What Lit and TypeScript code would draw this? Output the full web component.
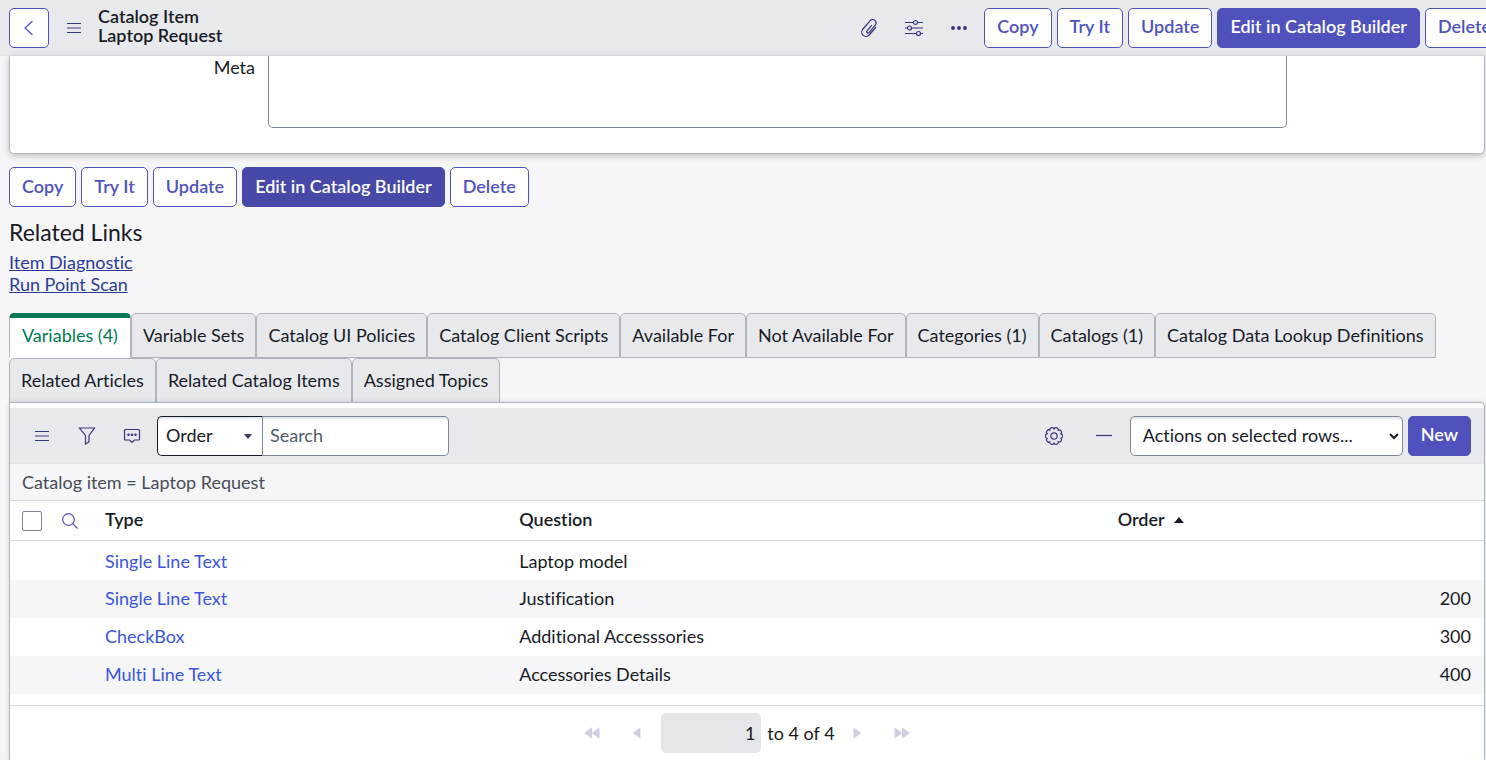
import { LitElement, html, svg, css } from "lit";
import { customElement, state } from "lit/decorators.js";
import { classMap } from "lit/directives/class-map.js";

interface Variable {
  type: string;
  question: string;
  order: string;
}

const TABS = [
  "Variables (4)",
  "Variable Sets",
  "Catalog UI Policies",
  "Catalog Client Scripts",
  "Available For",
  "Not Available For",
  "Categories (1)",
  "Catalogs (1)",
  "Catalog Data Lookup Definitions",
  "Related Articles",
  "Related Catalog Items",
  "Assigned Topics",
];

const ROWS: Variable[] = [
  { type: "Single Line Text", question: "Laptop model", order: "" },
  { type: "Single Line Text", question: "Justification", order: "200" },
  { type: "CheckBox", question: "Additional Accesssories", order: "300" },
  { type: "Multi Line Text", question: "Accessories Details", order: "400" },
];

/* Scalloped outline of the settings gear: ten rounded lobes meeting in cusps */
const gearPath = (() => {
  const lobes = 10;
  let d = "";
  for (let i = 0; i <= 120; i++) {
    const a = (i / 120) * Math.PI * 2;
    const r = 7.1 + 1.5 * Math.sqrt(Math.abs(Math.cos((a * lobes) / 2)));
    d += `${i ? "L" : "M"}${(9 + r * Math.cos(a)).toFixed(2)} ${(9 + r * Math.sin(a)).toFixed(2)}`;
  }
  return d + "Z";
})();

const icons = {
  back: svg`<path d="M12.500 2 5 9l7.500 7" />`,
  menu: svg`<path d="M2 4.500h14M2 9h14M2 13.500h14" />`,
  clip: svg`<path d="M11.800 6.200 7 11.900a1.300 1.300 0 0 0 2 1.700l6.200-7.400a3.400 3.400 0 0 0-5.200-4.400L2.600 10.500a4.300 4.300 0 0 0 6.600 5.500l6.800-8" />`,
  sliders: svg`<path d="M0 3.500h8.500M12.500 3.500H18M0 9h2.500M6.500 9H18M0 14.500h11.500M15.500 14.500H18" /><circle cx="10.500" cy="3.500" r="2" /><circle cx="4.500" cy="9" r="2" /><circle cx="13.500" cy="14.500" r="2" />`,
  more: svg`<g fill="currentColor" stroke="none"><circle cx="3" cy="9" r="1.900" /><circle cx="9" cy="9" r="1.900" /><circle cx="15" cy="9" r="1.900" /></g>`,
  funnel: svg`<path d="M1.500 1h15l-5.500 7.500V15l-3.500 2V8.500z" />`,
  comment: svg`<path d="M2.500 2.500h13q1 0 1 1v8.500q0 1-1 1h-4L9 15.500 6.500 13h-4q-1 0-1-1V3.500q0-1 1-1z" /><g fill="currentColor" stroke="none"><circle cx="5.500" cy="7.800" r="1.300" /><circle cx="9" cy="7.800" r="1.300" /><circle cx="12.500" cy="7.800" r="1.300" /></g>`,
  gear: svg`<path d="${gearPath}" /><circle cx="9" cy="9" r="3.200" />`,
  minus: svg`<path d="M1 8.500h16" />`,
  search: svg`<circle cx="7.500" cy="7.500" r="5.800" /><path d="m11.700 11.700 5 5" />`,
  first: svg`<path fill="currentColor" stroke="none" d="M9 3.200v11.600L1.200 9zM16.500 3.200v11.600L8.700 9z" />`,
  prev: svg`<path fill="currentColor" stroke="none" d="M12.500 3.200v11.600L4.700 9z" />`,
  next: svg`<path fill="currentColor" stroke="none" d="M5.500 3.200v11.600L13.300 9z" />`,
  last: svg`<path fill="currentColor" stroke="none" d="M1.500 3.200v11.600L9.300 9zM9 3.200v11.600L16.800 9z" />`,
};

const icon = (name: keyof typeof icons) =>
  html`<svg class="icon" viewBox="0 0 18 18" aria-hidden="true">${icons[name]}</svg>`;

@customElement("app-root")
export class AppRoot extends LitElement {
  @state() private activeTab = 0;

  static styles = css`
    :host {
      display: flex;
      flex-direction: column;
      height: 100vh;
      overflow: hidden;
      background: #f6f6f8;
      color: #181b25;
      font: 18px/22px Lato, sans-serif;
      font-variant-ligatures: no-common-ligatures;
    }
    * {
      box-sizing: border-box;
    }
    button,
    input,
    select,
    textarea {
      font: inherit;
      font-variant-ligatures: inherit;
      color: inherit;
      margin: 0;
    }
    .icon {
      display: block;
      width: 18px;
      height: 18px;
      fill: none;
      stroke: currentColor;
      stroke-width: 1.2;
    }
    .bar {
      flex: none;
      display: flex;
      align-items: center;
      height: 56px;
      padding-left: 9px;
      background: #e8e9ed;
      border-bottom: 1px solid #e1e3e7;
      overflow: hidden;
    }
    .title {
      margin: 0;
      padding: 0 0 4px 2px;
      font-size: 18px;
      line-height: 19px;
      font-weight: 600;
      white-space: nowrap;
    }
    .title span {
      display: block;
    }
    .bar-menu {
      margin-left: 2px;
    }
    .bar-tools {
      display: flex;
      align-items: center;
      margin-left: auto;
      margin-right: -18px;
    }
    .tool {
      display: grid;
      place-items: center;
      width: 45px;
      height: 40px;
      padding: 0;
      border: 0;
      background: none;
      color: #34367f;
    }
    .actions {
      display: flex;
      gap: 5px;
    }
    .bar-actions {
      margin-left: 3px;
    }
    .btn {
      flex: none;
      height: 40px;
      padding: 0 12px 3px;
      border: 1px solid #4f52bd;
      border-radius: 5px;
      background: #fff;
      color: #4f52bd;
      font-weight: 600;
      white-space: nowrap;
    }
    .btn.primary {
      background: #4f52bd;
      color: #fff;
    }
    .btn.hovered {
      background: #4649a7;
      border-color: #4649a7;
    }
    .btn.back {
      width: 40px;
      padding: 0 0 0 10px;
    }
    .form {
      flex: none;
      display: grid;
      grid-template-columns: 258px 1fr;
      padding: 0 197px 25px 0;
      margin: 0 1px 0 9px;
      background: #fff;
      border: 1px solid #b0b5be;
      border-top: 0;
      border-radius: 0 0 5px 5px;
      box-shadow: 0 2px 6px rgba(30, 35, 50, 0.25);
    }
    .form label {
      padding-right: 13px;
      text-align: right;
    }
    .form textarea {
      display: block;
      width: 100%;
      height: 72px;
      border: 1px solid #7d8797;
      border-top: 0;
      border-radius: 0 0 5px 5px;
      background: #fff;
      resize: none;
    }
    .footer-actions {
      padding: 13px 9px 0;
    }
    .related {
      padding: 12px 9px 0;
    }
    .related h2 {
      margin: 0 0 6px;
      font-size: 23px;
      line-height: 26px;
      font-weight: 400;
    }
    .related a {
      display: table;
      color: #2b3b99;
    }
    .tabs {
      flex: none;
      display: flex;
      flex-wrap: wrap;
      margin: 18px 9px 0;
    }
    .tab {
      height: 45px;
      padding: 0 11px 2px;
      border: 1px solid #aeb4be;
      border-radius: 5px 5px 0 0;
      background: #e8e9ed;
      white-space: nowrap;
    }
    .tab.selected {
      padding: 0 12px 6px;
      border-top: 5px solid #007a53;
      border-bottom-color: #fff;
      background: #fff;
      color: #007a53;
    }
    .panel {
      flex: 1;
      margin: -1px 1px 0 9px;
      border: 1px solid #aeb4be;
      border-bottom: 0;
      border-radius: 0 5px 0 0;
      background: #fff;
      padding-top: 5px;
      box-shadow: 0 0 5px rgba(30, 35, 50, 0.15);
    }
    .list-bar {
      display: flex;
      align-items: center;
      height: 56px;
      padding: 0 13px 0 9px;
      background: #e8e9ed;
      border-bottom: 1px solid #e1e3e7;
    }
    .picker {
      position: relative;
      margin-left: 3px;
    }
    .picker select {
      display: block;
      appearance: none;
      width: 106px;
      height: 40px;
      padding: 0 8px 1px;
      border: 1px solid #181b25;
      border-right-color: #7d8797;
      border-radius: 5px 0 0 5px;
      background: #fff;
      box-shadow: inset 0 3px 2px -1px #e2e5e6;
    }
    .caret {
      position: absolute;
      right: 11px;
      top: 18px;
      width: 8px;
      height: 5px;
      fill: #3c4150;
      pointer-events: none;
    }
    .find {
      width: 186px;
      height: 40px;
      padding: 0 7px 1px;
      border: 1px solid #7d8797;
      border-left: 0;
      border-radius: 0 5px 5px 0;
      background: #fff;
      box-shadow: inset 0 3px 2px -1px #e2e5e6;
    }
    .find::placeholder {
      color: #535a66;
      opacity: 1;
    }
    .settings {
      margin-left: auto;
      margin-right: 5px;
    }
    .bulk {
      width: 273px;
      height: 40px;
      margin: 0 5px 0 3px;
      padding: 0 0 1px 8px;
      border: 1px solid #7d8797;
      border-radius: 5px;
      background: #fff;
      box-shadow: inset 0 3px 2px -1px #e2e5e6;
    }
    .crumb {
      height: 37px;
      padding: 7px 12px 0;
      background: #f6f6f8;
      border-bottom: 1px solid #d3d6dd;
      color: #474d59;
    }
    table {
      width: 100%;
      table-layout: fixed;
      border-collapse: separate;
      border-spacing: 0;
    }
    .col-tools {
      width: 82px;
    }
    .col-type {
      width: 28.1%;
    }
    .col-question {
      width: 40.6%;
    }
    th {
      height: 40px;
      padding: 0 13px 3px;
      border-bottom: 1px solid #d3d6dd;
      text-align: left;
      font-weight: 600;
    }
    .select-all {
      display: flex;
      align-items: center;
      gap: 19px;
      padding-left: 12px;
      height: 39px;
      color: #4f52bd;
    }
    th.tools {
      padding: 0;
    }
    .check {
      appearance: none;
      width: 20px;
      height: 20px;
      border: 1px solid #7d8797;
      border-radius: 2px;
      background: #fff;
    }
    .bare {
      padding: 0;
      border: 0;
      background: none;
    }
    .sort {
      display: inline-block;
      width: 10px;
      height: 6px;
      margin-left: 5px;
      vertical-align: 3px;
      fill: #181b25;
    }
    td {
      height: 38px;
      padding: 0 13px 2px;
    }
    tbody tr:first-child td {
      height: 39px;
      padding-bottom: 0;
    }
    td a {
      color: #3a55d9;
      text-decoration: none;
    }
    tbody tr:nth-child(even) {
      background: #f6f6f8;
    }
    .num {
      text-align: right;
    }
    .pager {
      display: flex;
      align-items: center;
      justify-content: center;
      margin-top: 11px;
      padding: 7px 0;
      border-top: 1px solid #d3d6dd;
    }
    .pager .tool {
      color: #cfcee3;
    }
    .page {
      width: 100px;
      height: 40px;
      margin: 0 6px 0 2px;
      padding: 0 6px;
      border: 0;
      border-radius: 5px;
      background: #e5e6ea;
      text-align: right;
    }
  `;

  private renderActions(hovered: boolean) {
    return html`
      <button class="btn">Copy</button>
      <button class="btn">Try It</button>
      <button class="btn">Update</button>
      <button class=${classMap({ btn: true, primary: true, hovered })}>Edit in Catalog Builder</button>
      <button class="btn">Delete</button>
    `;
  }

  render() {
    return html`
      <header class="bar">
        <button class="btn back" aria-label="Back">${icon("back")}</button>
        <button class="tool bar-menu" aria-label="Additional actions">${icon("menu")}</button>
        <h1 class="title"><span>Catalog Item</span><span>Laptop Request</span></h1>
        <div class="bar-tools">
          <button class="tool" aria-label="Attachments">${icon("clip")}</button>
          <button class="tool" aria-label="Personalize form">${icon("sliders")}</button>
          <button class="tool" aria-label="More options">${icon("more")}</button>
          <div class="actions bar-actions">${this.renderActions(false)}</div>
        </div>
      </header>

      <section class="form">
        <label for="meta">Meta</label>
        <textarea id="meta"></textarea>
      </section>

      <div class="actions footer-actions">${this.renderActions(true)}</div>

      <nav class="related">
        <h2>Related Links</h2>
        <a href="#diagnostic">Item Diagnostic</a>
        <a href="#scan">Run Point Scan</a>
      </nav>

      <div class="tabs" role="tablist">
        ${TABS.map(
          (name, i) => html`<button
            role="tab"
            aria-selected=${i === this.activeTab}
            class=${classMap({ tab: true, selected: i === this.activeTab })}
            @click=${() => (this.activeTab = i)}
          >${name}</button>`,
        )}
      </div>

      <section class="panel">
        <div class="list-bar">
          <button class="tool" aria-label="List controls">${icon("menu")}</button>
          <button class="tool" aria-label="Filter">${icon("funnel")}</button>
          <button class="tool" aria-label="Activity stream">${icon("comment")}</button>
          <div class="picker">
            <select aria-label="Search field"><option>Order</option></select>
            <svg class="caret" viewBox="0 0 8 5" aria-hidden="true"><path d="M0 0h8L4 5z" /></svg>
          </div>
          <input class="find" type="text" placeholder="Search" aria-label="Search" />
          <button class="tool settings" aria-label="List settings">${icon("gear")}</button>
          <button class="tool" aria-label="Collapse list">${icon("minus")}</button>
          <select class="bulk" aria-label="Actions on selected rows"><option>Actions on selected rows...</option></select>
          <button class="btn primary">New</button>
        </div>
        <div class="crumb">Catalog item = Laptop Request</div>
        <table>
          <colgroup>
            <col class="col-tools" />
            <col class="col-type" />
            <col class="col-question" />
            <col />
          </colgroup>
          <thead>
            <tr>
              <th class="tools">
                <div class="select-all">
                  <input class="check" type="checkbox" aria-label="Select all rows" />
                  <button class="bare" aria-label="Search columns">${icon("search")}</button>
                </div>
              </th>
              <th>Type</th>
              <th>Question</th>
              <th>Order <svg class="sort" viewBox="0 0 10 6" aria-hidden="true"><path d="M0 6h10L5 0z" /></svg></th>
            </tr>
          </thead>
          <tbody>
            ${ROWS.map(
              (row) => html`<tr>
                <td></td>
                <td><a href="#variable">${row.type}</a></td>
                <td>${row.question}</td>
                <td class="num">${row.order}</td>
              </tr>`,
            )}
          </tbody>
        </table>
        <div class="pager">
          <button class="tool" aria-label="First page">${icon("first")}</button>
          <button class="tool" aria-label="Previous page">${icon("prev")}</button>
          <input class="page" id="page" type="text" value="1" />
          <label for="page">to 4 of 4</label>
          <button class="tool" aria-label="Next page">${icon("next")}</button>
          <button class="tool" aria-label="Last page">${icon("last")}</button>
        </div>
      </section>
    `;
  }
}
